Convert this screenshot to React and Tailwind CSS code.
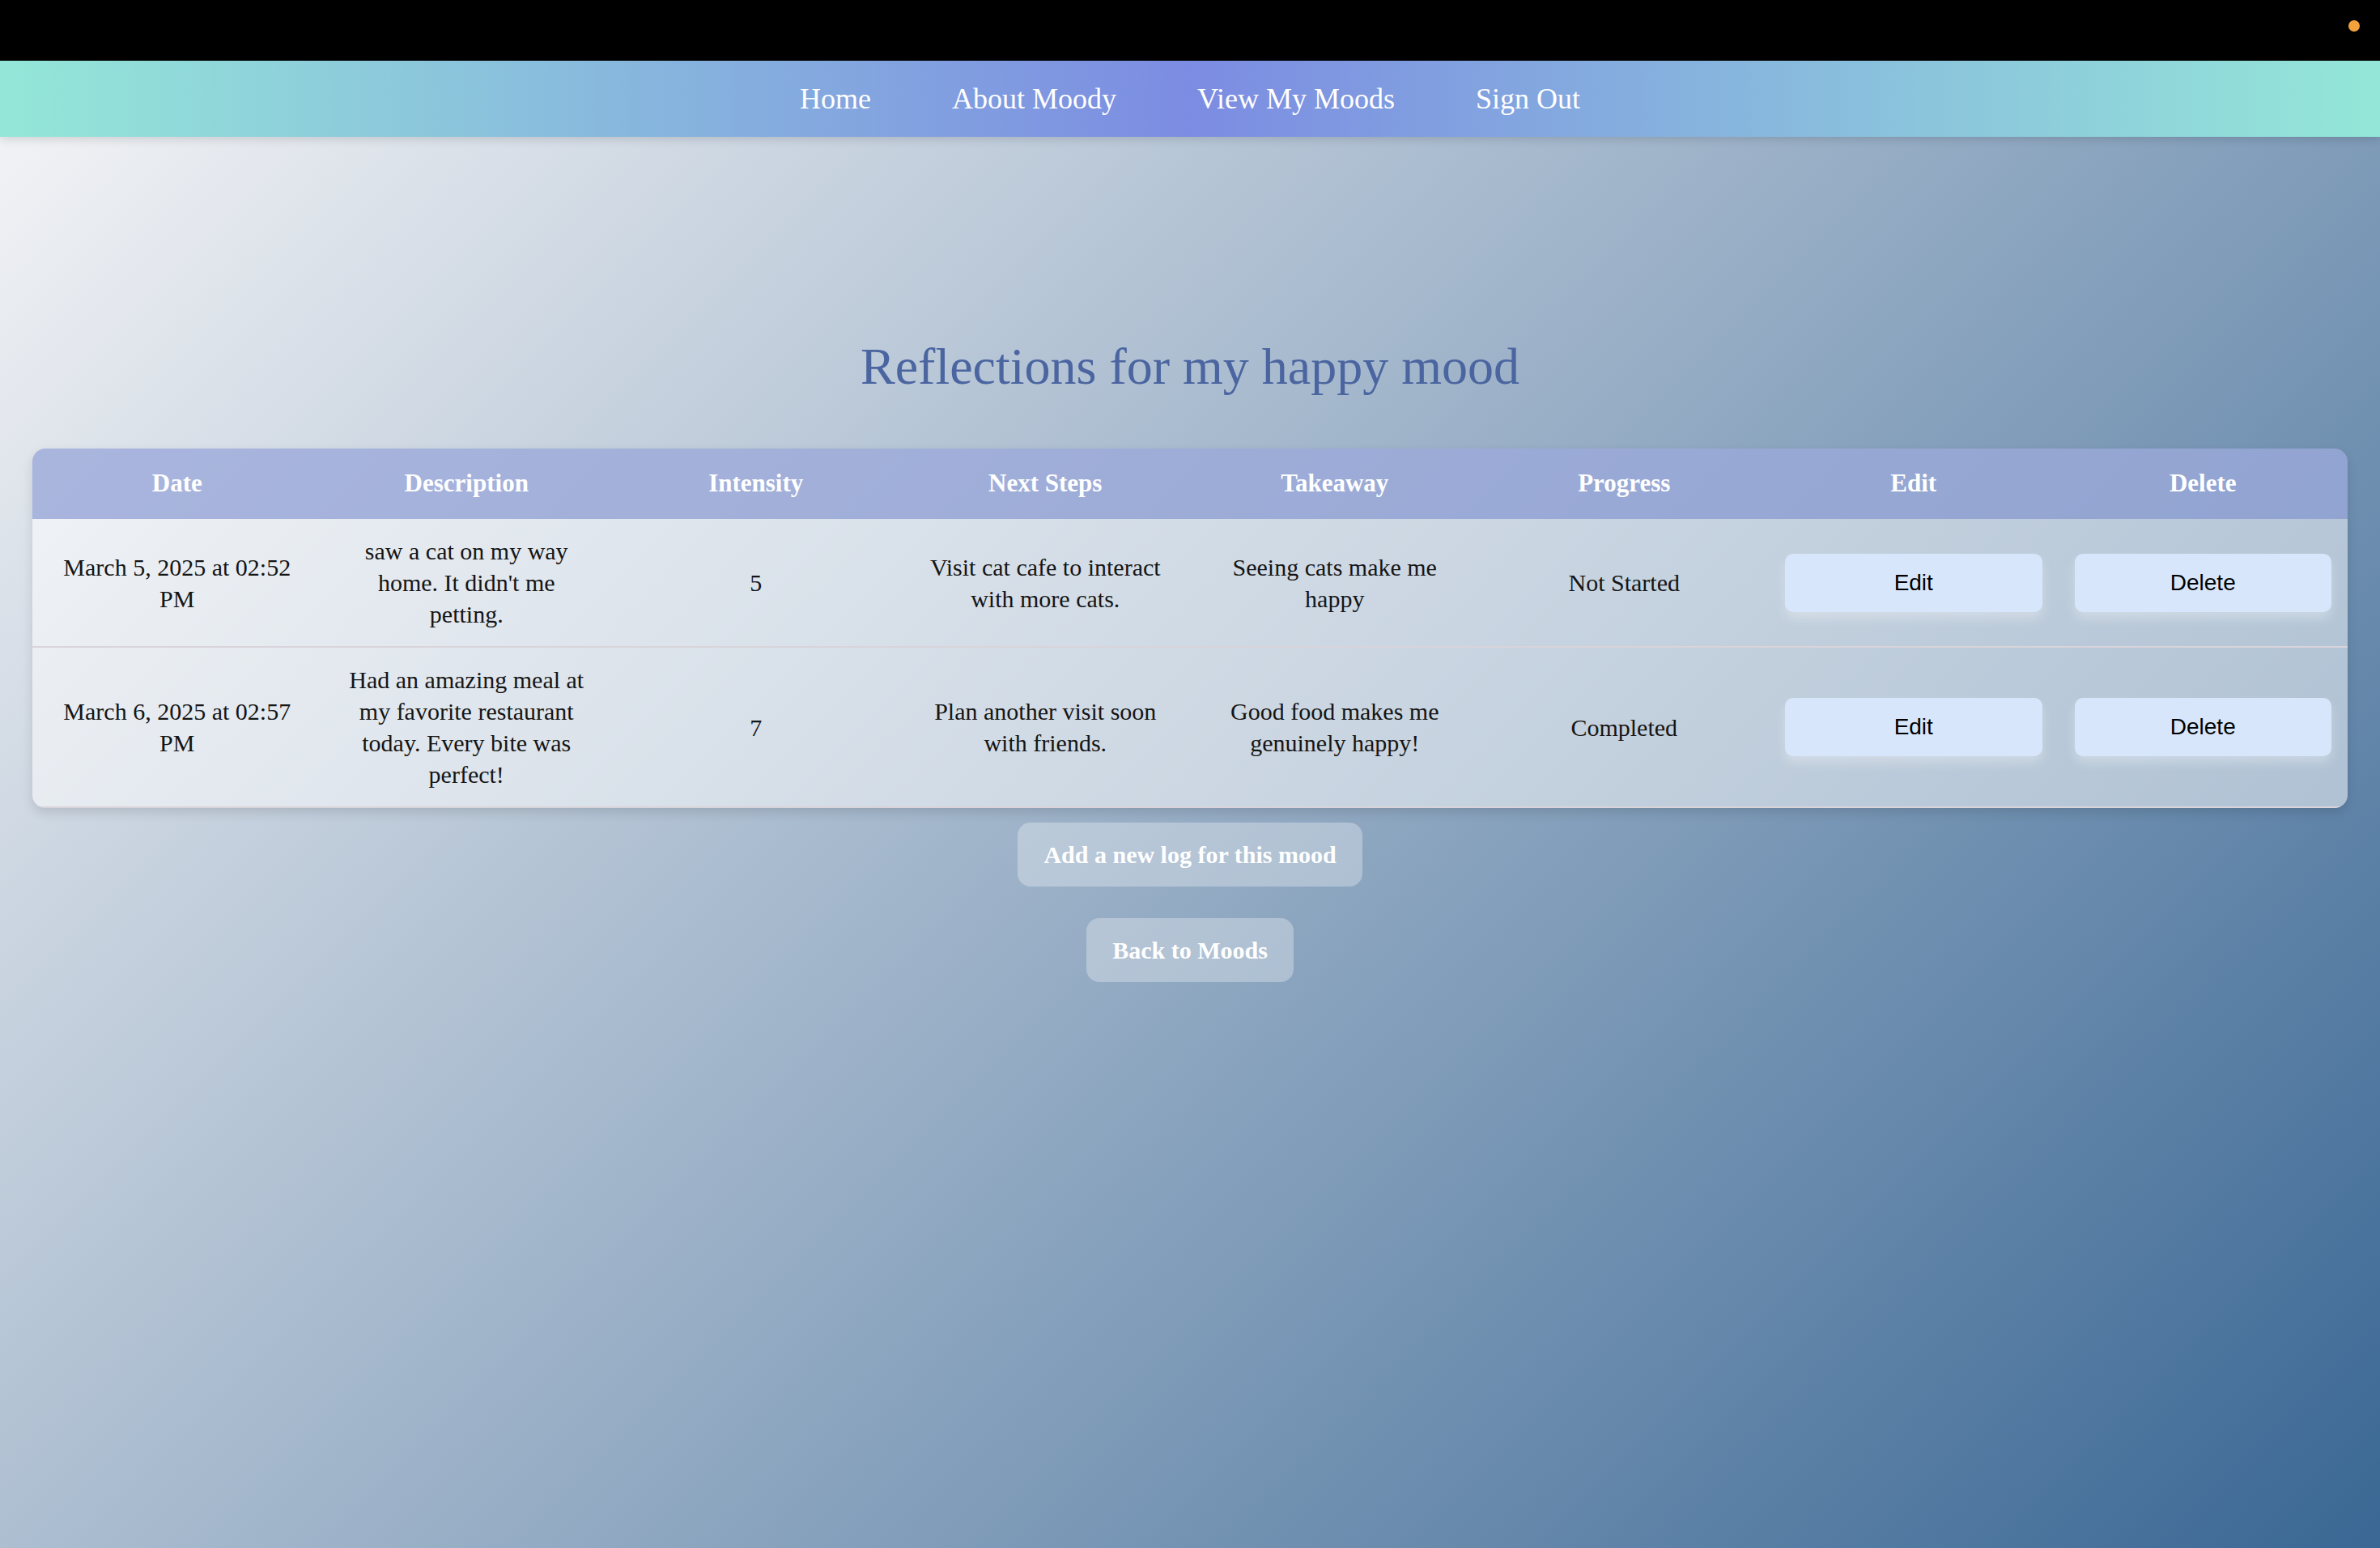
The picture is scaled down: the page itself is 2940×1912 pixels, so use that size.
const serif = { fontFamily: '"Liberation Serif", "Times New Roman", serif' };

const logs = [
  {
    date: "March 5, 2025 at 02:52 PM",
    description: "saw a cat on my way home. It didn't me petting.",
    intensity: 5,
    nextSteps: "Visit cat cafe to interact with more cats.",
    takeaway: "Seeing cats make me happy",
    progress: "Not Started",
  },
  {
    date: "March 6, 2025 at 02:57 PM",
    description: "Had an amazing meal at my favorite restaurant today. Every bite was perfect!",
    intensity: 7,
    nextSteps: "Plan another visit soon with friends.",
    takeaway: "Good food makes me genuinely happy!",
    progress: "Completed",
  },
];

const columns = [
  "Date",
  "Description",
  "Intensity",
  "Next Steps",
  "Takeaway",
  "Progress",
  "Edit",
  "Delete",
];

function NavBar() {
  return (
    <nav className="h-[94px] flex items-center justify-center gap-[100px] bg-[linear-gradient(to_right,#94e7d8,#7c8ce2_50%,#94e7d8)] shadow-[0_4px_10px_rgba(0,0,0,0.12)] relative z-10">
      {["Home", "About Moody", "View My Moods", "Sign Out"].map((item) => (
        <a key={item} className="text-[36px] text-white leading-none cursor-pointer">
          {item}
        </a>
      ))}
    </nav>
  );
}

function TextCell({ children }) {
  return (
    <td className="px-[24px] py-[20px] text-center align-middle text-[30px] leading-[39px] text-[#151515]">
      {children}
    </td>
  );
}

function ActionCell({ label }) {
  return (
    <td className="px-[20px] py-[20px] align-middle">
      <button
        className="w-full h-[72px] rounded-[10px] bg-[#d8e6fc] text-[28px] text-black shadow-[0_8px_14px_rgba(255,255,255,0.3)]"
        style={{ fontFamily: '"Liberation Sans", Arial, sans-serif' }}
      >
        {label}
      </button>
    </td>
  );
}

function LogsTable() {
  return (
    <div className="mx-[40px] rounded-[16px] overflow-hidden shadow-[0_6px_14px_rgba(0,0,0,0.12)]">
      <table className="w-full table-fixed border-collapse">
        <thead>
          <tr className="h-[87px] bg-[#9ba9d9]/80">
            {columns.map((col) => (
              <th key={col} className="text-[31px] font-bold text-white text-center">
                {col}
              </th>
            ))}
          </tr>
        </thead>
        <tbody className="bg-white/50">
          {logs.map((log) => (
            <tr key={log.date} className="border-b-2 border-[#d9d3da]">
              <TextCell>{log.date}</TextCell>
              <TextCell>{log.description}</TextCell>
              <TextCell>{log.intensity}</TextCell>
              <TextCell>{log.nextSteps}</TextCell>
              <TextCell>{log.takeaway}</TextCell>
              <TextCell>{log.progress}</TextCell>
              <ActionCell label="Edit" />
              <ActionCell label="Delete" />
            </tr>
          ))}
        </tbody>
      </table>
    </div>
  );
}

export default function App() {
  return (
    <div className="w-[2940px] h-[1912px] flex flex-col bg-black overflow-hidden" style={serif}>
      <div className="h-[75px] shrink-0 flex justify-end items-start pr-[25px] pt-[25px]">
        <span className="w-[14px] h-[14px] rounded-full bg-[#f4a13c]" />
      </div>

      <div className="flex-1 bg-[linear-gradient(135deg,#f5f5f7,#3a6794)]">
        <NavBar />

        <main className="flex flex-col">
          <h1 className="mt-[244px] mb-[61px] text-center text-[64px] leading-[80px] text-[#4b65a0]">
            Reflections for my happy mood
          </h1>

          <LogsTable />

          <div className="flex flex-col items-center gap-[39px] mt-[18px]">
            <button className="h-[79px] px-[32px] rounded-[16px] bg-white/30 text-white text-[30px] font-bold">
              Add a new log for this mood
            </button>
            <button className="h-[79px] px-[32px] rounded-[16px] bg-white/30 text-white text-[30px] font-bold">
              Back to Moods
            </button>
          </div>
        </main>
      </div>
    </div>
  );
}
